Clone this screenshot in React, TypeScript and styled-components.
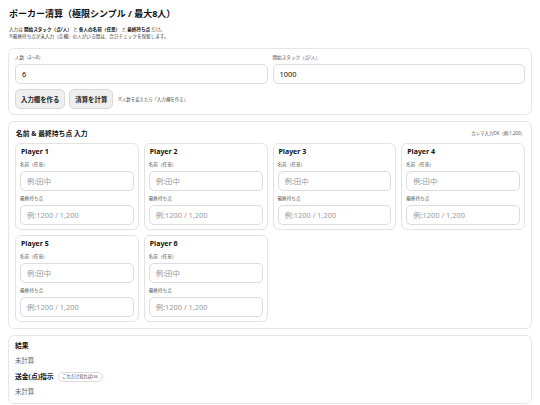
import styled, { createGlobalStyle } from 'styled-components'

const GlobalStyle = createGlobalStyle`
  * { box-sizing: border-box; }
  body {
    margin: 0;
    background: #fff;
    color: #111;
    font-family: "Noto Sans", "Noto Sans CJK JP", sans-serif;
  }
`

const Page = styled.div`
  padding: 7px 8px 0 8px;
  width: 540px;
`

const Title = styled.h1`
  margin: 0 0 0 1px;
  font-size: 9px;
  line-height: 13px;
  font-weight: 700;
`

const Lead = styled.p`
  margin: 5.5px 0 0 1px;
  font-size: 4.6px;
  line-height: 7px;
  color: #444;
  b { color: #111; }
`

const Card = styled.section<{ $mt?: number; $pb?: number }>`
  margin-top: ${p => p.$mt ?? 6}px;
  border: 1px solid #e6e6e6;
  border-radius: 6px;
  padding: 4px 6px ${p => p.$pb ?? 6}px 6px;
`

const TwoCol = styled.div`
  display: grid;
  grid-template-columns: 1fr 1fr;
  gap: 5px;
`

const Field = styled.div`
  display: flex;
  flex-direction: column;
  min-width: 0;
`

const Label = styled.label<{ $mt?: number }>`
  font-size: 4.6px;
  line-height: 8px;
  color: #555;
  margin: ${p => p.$mt ?? 3}px 0 3px 0;
`

const Input = styled.input`
  width: 100%;
  min-width: 0;
  height: 20px;
  border: 1px solid #dcdcdc;
  border-radius: 5px;
  padding: 0 6px;
  font-family: inherit;
  font-size: 7.4px;
  color: #111;
  background: #fff;
  outline: none;
  &::placeholder { color: #9a9a9a; }
`

const ButtonRow = styled.div`
  display: flex;
  align-items: center;
  gap: 4px;
  margin-top: 5px;
`

const Button = styled.button`
  height: 20px;
  padding: 0 5px;
  border: 1px solid #d8d8d8;
  border-radius: 5px;
  background: #efefef;
  font-family: inherit;
  font-size: 6.4px;
  font-weight: 700;
  color: #222;
`

const Note = styled.span`
  font-size: 4.4px;
  color: #555;
  margin-left: 1px;
`

const Header = styled.div`
  display: flex;
  align-items: center;
  justify-content: space-between;
  height: 10px;
  margin: 2px 0 5px 1px;
`

const HeaderTitle = styled.h2`
  margin: 0;
  font-size: 6.8px;
  font-weight: 700;
`

const HeaderNote = styled.span`
  font-size: 4.4px;
  color: #555;
`

const PlayerGrid = styled.div`
  display: grid;
  grid-template-columns: repeat(4, minmax(0, 1fr));
  gap: 5px;
`

const PlayerCard = styled.div`
  border: 1px solid #e3e3e3;
  border-radius: 6px;
  padding: 3px 4px 4px 4px;
  display: flex;
  flex-direction: column;
  min-width: 0;
`

const PlayerName = styled.h3`
  margin: 0 0 0 1px;
  font-size: 7px;
  line-height: 10px;
  font-weight: 700;
`

const ResultTitle = styled.h2`
  margin: 1px 0 0 0;
  display: flex;
  align-items: center;
  gap: 4px;
  font-size: 6.8px;
  line-height: 10px;
  font-weight: 700;
`

const Badge = styled.span`
  border: 1px solid #ddd;
  border-radius: 8px;
  padding: 0 4px;
  font-size: 4.2px;
  line-height: 8px;
  font-weight: 400;
  color: #444;
`

const Muted = styled.p`
  margin: 5px 0 6px 0;
  font-size: 6.4px;
  line-height: 10px;
  color: #666;
`

const players = [1, 2, 3, 4, 5, 6]

export default function App() {
  return (
    <Page>
      <GlobalStyle />
      <Title>ポーカー清算（極限シンプル / 最大8人）</Title>
      <Lead>
        入力は <b>開始スタック（点/人）</b> と <b>各人の名前（任意）</b> と <b>最終持ち点</b> だけ。
        <br />
        ※最終持ち点が未入力（空欄）の人がいる間は、合計チェックを保留します。
      </Lead>

      <Card $mt={8.5} $pb={5}>
        <TwoCol>
          <Field>
            <Label $mt={0}>人数（2〜8）</Label>
            <Input defaultValue="6" />
            <ButtonRow>
              <Button>入力欄を作る</Button>
              <Button>清算を計算</Button>
              <Note>※人数を変えたら「入力欄を作る」</Note>
            </ButtonRow>
          </Field>
          <Field>
            <Label $mt={0}>開始スタック（点/人）</Label>
            <Input defaultValue="1000" />
          </Field>
        </TwoCol>
      </Card>

      <Card>
        <Header>
          <HeaderTitle>名前 &amp; 最終持ち点 入力</HeaderTitle>
          <HeaderNote>カンマ入力OK（例:1,200）</HeaderNote>
        </Header>
        <PlayerGrid>
          {players.map(n => (
            <PlayerCard key={n}>
              <PlayerName>Player {n}</PlayerName>
              <Label>名前（任意）</Label>
              <Input placeholder="例:田中" />
              <Label>最終持ち点</Label>
              <Input placeholder="例:1200 / 1,200" />
            </PlayerCard>
          ))}
        </PlayerGrid>
      </Card>

      <Card $pb={0}>
        <ResultTitle>結果</ResultTitle>
        <Muted>未計算</Muted>
        <ResultTitle>
          送金(点)指示<Badge>これだけ見ればOK</Badge>
        </ResultTitle>
        <Muted>未計算</Muted>
      </Card>
    </Page>
  )
}
